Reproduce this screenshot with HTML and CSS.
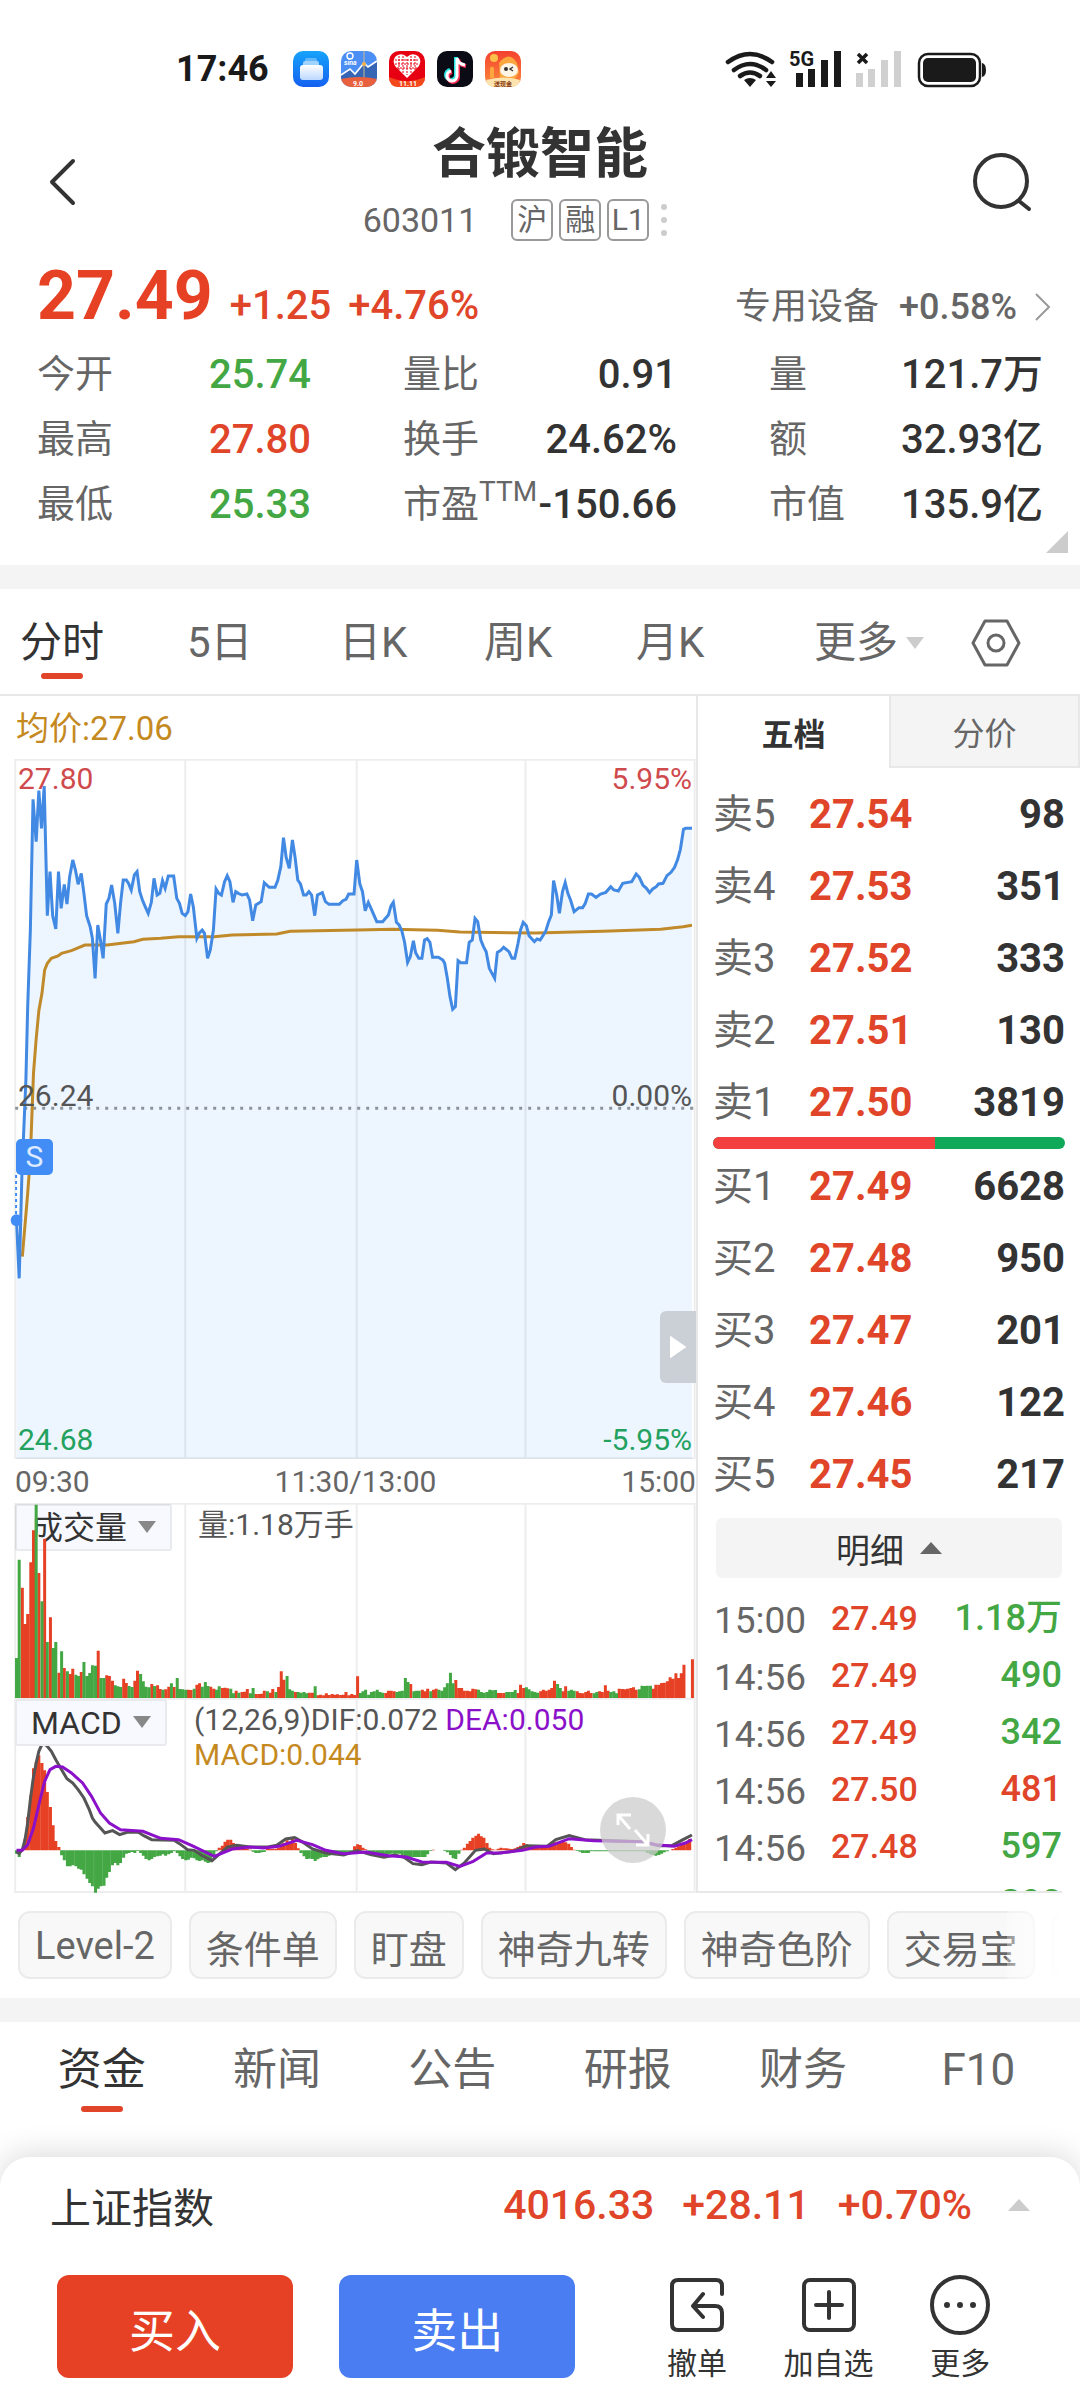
FILE: index.html
```html
<!DOCTYPE html>
<html lang="zh-CN">
<head>
<meta charset="utf-8">
<meta name="viewport" content="width=device-width, initial-scale=1">
<title>合锻智能 603011</title>
<link rel="stylesheet" href="styles.css">
</head>
<body>
<div class="status">
  <span class="clock">17:46</span>
  <div class="apps">
    <svg class="app" viewBox="0 0 36 36"><defs><linearGradient id="ga" x2="0" y2="1"><stop offset="0" stop-color="#17a3fb"/><stop offset="1" stop-color="#1460f0"/></linearGradient><linearGradient id="gb" x2="0" y2="1"><stop offset="0" stop-color="#fff"/><stop offset="1" stop-color="#bcd8ff"/></linearGradient></defs><rect width="36" height="36" rx="10" fill="url(#ga)"/><rect x="12" y="7" width="12" height="5" rx="2" fill="#63b8fb"/><rect x="10" y="10" width="16" height="6" rx="2" fill="#9fd2fd"/><rect x="7" y="14" width="23" height="15" rx="3" fill="url(#gb)"/></svg>
    <svg class="app" viewBox="0 0 36 36"><defs><clipPath id="ca"><rect width="36" height="36" rx="10"/></clipPath></defs><g clip-path="url(#ca)"><rect width="36" height="36" fill="#4b8ff5"/><path d="M0 24 9 17l5 6 9-11 4 4 9-6v18H0z" fill="#3566b5"/><path d="M0 24 9 18l5 5 9-11 4 4 9-6" fill="none" stroke="#fff" stroke-width="1.6"/><path d="M23 0v28" stroke="#c9b78f" stroke-width="1"/><circle cx="23" cy="13" r="2" fill="#f0ae48"/><path d="M0 28q18-4 36 0v8H0z" fill="#e9603f"/><circle cx="9" cy="5" r="3" fill="none" stroke="#fff" stroke-width="1.4"/><text x="3" y="14" class="tiny tiny-i">sina</text><text x="12" y="35" class="tiny">9.0</text></g></svg>
    <svg class="app" viewBox="0 0 36 36"><rect width="36" height="36" rx="10" fill="#e60012"/><path d="M0 26q18 8 36 0v0q0 10-10 10H10Q0 36 0 26z" fill="#f2481c"/><path d="M18 27 6 15q-3-6 1-10 6-4 11 1 5-5 11-1 4 4 1 10z" fill="#fff"/><path d="M10 5v14M14 5v17M18 8v16M22 5v17M26 5v14M6 9h24M6 13h24M8 17h20" stroke="#e60012" stroke-width="1" stroke-dasharray="2 1"/><text x="10" y="35" class="tiny">11.11</text></svg>
    <svg class="app" viewBox="0 0 36 36"><rect width="36" height="36" rx="10" fill="#0a0b14"/><g fill="none" stroke-width="4"><path d="M19 6v18a5 5 0 1 1-6-5M19 7q1 6 8 7" stroke="#2ae6e6"/><path d="M21 8v18a5 5 0 1 1-6-5M21 8q1 6 8 7" stroke="#fb2d55"/><path d="M20 7v18a5 5 0 1 1-6-5M20 7q1 6 8 7" stroke="#fff" stroke-width="3"/></g></svg>
    <svg class="app" viewBox="0 0 36 36"><defs><linearGradient id="gc" x2="0" y2="1"><stop offset="0" stop-color="#f4412f"/><stop offset="1" stop-color="#fb8c3b"/></linearGradient></defs><rect width="36" height="36" rx="10" fill="url(#gc)"/><circle cx="9" cy="7" r="4" fill="#fbc04b"/><path d="M14 12q10-13 18 0l2 10-5 7H15z" fill="#fba63f"/><ellipse cx="24" cy="19" rx="9" ry="7" fill="#fff5e6"/><circle cx="21" cy="18" r="2" fill="#333"/><path d="m28 16-3 2 3 2" fill="none" stroke="#333" stroke-width="1.4"/><path d="M5 27V17q2-3 4 0v10" fill="#fba63f"/><path d="M1 29q17-5 34 0-1 7-9 7H10q-8 0-9-7z" fill="#fde3ad"/><text x="9" y="35" class="tiny tiny-b">送现金</text></svg>
  </div>
  <svg class="signals" viewBox="720 48 270 42">
    <g fill="none" stroke="#1a1a1a" stroke-width="4.600" stroke-linecap="round"><path d="M728 62q22-16 44 0"/><path d="M734 70q16-12 32 0"/><path d="M740 76q10-7 20 0"/></g>
    <path d="M744 80q6-4 12 0l-6 7zM766 78l5-7 5 7zM766 81h10l-5 6z" fill="#1a1a1a"/>
    <text x="789" y="66" class="fiveg">5G</text>
    <path d="M796 73h7v14h-7zM808 69h7v18h-7zM821 60h7v27h-7zM834 51h7v36h-7z" fill="#1a1a1a"/>
    <path d="m858 54 9 9m0-9-9 9" stroke="#1a1a1a" stroke-width="3.500"/>
    <path d="M856 73h7v14h-7zM868 69h7v18h-7zM881 60h7v27h-7zM894 51h7v36h-7z" fill="#d0d0d0"/>
    <rect x="919" y="54" width="61" height="32" rx="9" fill="none" stroke="#1a1a1a" stroke-width="2.500"/><rect x="923" y="58" width="53" height="24" rx="5" fill="#1a1a1a"/><path d="M982 63q4 1 4 7t-4 7z" fill="#1a1a1a"/>
  </svg>
</div>

<header class="header">
  <button class="icon-btn" aria-label="返回"><svg width="28" height="50" viewBox="0 0 28 50"><path d="M25 4 4 25l21 21" class="line"/></svg></button>
  <div class="heading">
    <h1>合锻智能</h1>
    <div class="sub"><span class="code">603011</span><span class="tag">沪</span><span class="tag">融</span><span class="tag">L1</span><span class="dots"><i></i><i></i><i></i></span></div>
  </div>
  <button class="icon-btn" aria-label="搜索"><svg width="60" height="60" viewBox="0 0 60 60"><circle cx="29" cy="29" r="26" class="line"/><path d="m47 49 10 8" class="line"/></svg></button>
</header>

<section class="quote">
  <div class="price-row">
    <strong class="price">27.49</strong><span class="chg">+1.25</span><span class="chg">+4.76%</span>
    <a class="sector" href="#"><span>专用设备</span><span class="sector-num">+0.58%</span><svg width="16" height="30" viewBox="0 0 16 30"><path d="m1 2 13 13L1 28" fill="none" stroke="#999" stroke-width="2"/></svg></a>
  </div>
  <dl class="stats">
    <div><dt>今开</dt><dd class="down">25.74</dd></div><div><dt>量比</dt><dd>0.91</dd></div><div><dt>量</dt><dd>121.7万</dd></div>
    <div><dt>最高</dt><dd class="up">27.80</dd></div><div><dt>换手</dt><dd>24.62%</dd></div><div><dt>额</dt><dd>32.93亿</dd></div>
    <div><dt>最低</dt><dd class="down">25.33</dd></div><div><dt>市盈<sup>TTM</sup></dt><dd>-150.66</dd></div><div><dt>市值</dt><dd>135.9亿</dd></div>
  </dl>
  <span class="corner"></span>
</section>

<nav class="periods">
  <button class="on">分时</button><button>5日</button><button>日K</button><button>周K</button><button>月K</button><button>更多<i class="tri-down light"></i></button>
  <button aria-label="设置"><svg width="50" height="48" viewBox="0 0 50 48"><path d="M14 2h22l12 22-12 22H14L2 24z" fill="none" stroke="#666" stroke-width="3" stroke-linejoin="round"/><circle cx="25" cy="24" r="8" fill="none" stroke="#666" stroke-width="3"/></svg></button>
</nav>

<main class="market">
  <div class="charts">
    <div class="avg">均价:27.06</div>
    <div class="plot plot-price">
      <svg viewBox="0 57 1559 2100" preserveAspectRatio="none">
        <path id="area" class="area"/>
        <path class="grid" d="M34 59H1557M34 2155H1557M34 57V2157M415 57V2157M799 57V2157M1177 57V2157M1556 57V2157"/>
        <path class="zero" d="M34 1105H1554"/>
        <polyline class="ma" points="50,1550 62,1360 68,1250 75,1000 81,897 87,812 94,760 100,690 106,670 115,655 130,648 138,640 160,632 190,615 240,615 300,605 320,598 360,595 400,590 480,590 520,585 620,582 650,574 800,570 880,568 980,571 1030,576 1200,579 1350,574 1480,568 1530,560 1550,556"/>
        <polyline id="price" class="trend" points="37,1441 43,1615 49,1305 58,1020 62,800 68,570 74,178 81,305 87,152 93,265 99,138 106,527 112,395 118,527 125,567 131,395 137,505 144,433 150,492 156,410 163,360 169,390 175,433 182,400 188,460 194,527 202,560 207,595 213,715 219,555 225,600 231,655 238,492 244,475 250,435 257,490 264,580 270,490 276,420 283,420 288,430 294,450 301,405 307,395 313,455 319,480 326,502 332,520 339,487 345,415 352,465 358,460 364,422 370,445 377,408 389,408 396,475 402,490 408,520 415,527 421,515 427,462 433,500 441,595 447,578 453,570 458,580 465,655 471,630 478,570 484,447 490,460 496,465 503,425 509,407 515,425 522,487 528,455 534,460 542,465 553,462 559,480 566,542 573,495 585,485 592,428 603,442 616,442 622,422 629,380 635,293 641,352 648,385 655,300 661,352 667,420 673,432 680,465 686,465 692,455 698,465 705,527 711,465 722,458 729,485 737,493 760,493 768,482 775,478 781,462 793,462 799,360 806,432 812,455 818,512 825,487 831,505 844,545 857,545 870,525 876,497 881,487 888,547 894,555 900,572 906,605 913,667 919,650 926,602 931,638 938,655 945,655 951,600 957,596 963,607 969,652 982,652 992,660 996,670 1002,715 1008,770 1014,808 1020,800 1026,662 1032,668 1045,668 1051,607 1058,600 1064,535 1070,545 1077,600 1083,620 1089,635 1096,685 1108,715 1114,637 1121,632 1128,622 1140,635 1147,655 1153,655 1160,612 1166,570 1172,547 1179,557 1185,587 1197,605 1203,597 1210,600 1222,575 1229,545 1235,525 1240,422 1247,465 1253,520 1260,455 1266,428 1272,460 1278,480 1286,515 1297,503 1305,503 1311,490 1318,462 1325,462 1335,472 1345,462 1357,457 1368,440 1375,450 1385,453 1395,430 1415,425 1425,402 1432,412 1440,435 1448,445 1455,458 1462,447 1470,440 1475,432 1485,430 1494,407 1503,397 1511,382 1518,358 1524,328 1531,268 1536,265 1550,265"/>
        <path class="marker" d="M36 1305V1440"/>
        <ellipse cx="37" cy="1441" rx="13" ry="18" fill="#418df5"/>
      </svg>
      <span class="lab tl up2">27.80</span><span class="lab tr up2">5.95%</span>
      <span class="lab ml">26.24</span><span class="lab mr">0.00%</span>
      <span class="lab bl down2">24.68</span><span class="lab br down2">-5.95%</span>
      <span class="sell-mark">S</span>
      <button class="handle" aria-label="展开"><svg width="18" height="22" viewBox="0 0 18 22"><path d="M1 1q0-2 2 0l13 9q2 1 0 2L3 21q-2 2-2 0z" fill="#fff"/></svg></button>
    </div>
    <div class="times"><span>09:30</span><span>11:30/13:00</span><span>15:00</span></div>
    <div class="plot plot-sub">
      <button class="pick">成交量<i class="tri-down"></i></button>
      <svg viewBox="0 70 1559 585" preserveAspectRatio="none">
        <path class="grid" d="M34 72H1557M34 70V655M415 70V655M799 70V655M1177 70V655M1556 70V655"/>
        <path id="vol-up" class="bar-up"/><path id="vol-down" class="bar-down"/>
      </svg>
      <p class="legend legend-vol">量:1.18万手</p>
    </div>
    <div class="plot plot-sub">
      <svg viewBox="0 655 1559 585" preserveAspectRatio="none">
        <path class="grid" d="M34 657H1557M34 1237H1557M34 655V1240M415 655V1240M799 655V1240M1177 655V1240M1556 655V1240"/>
        <path id="macd-up" class="bar-up"/><path id="macd-down" class="bar-down"/>
        <polyline class="dif" points="37,1115 43,1122 50,1110 56,1080 62,1030 68,960 74,900 81,850 87,815 93,797 99,792 106,800 115,815 125,840 138,870 150,897 163,910 175,930 188,955 200,990 207,1015 213,1027 225,1045 235,1060 252,1053 268,1065 285,1058 310,1058 322,1068 340,1080 390,1082 402,1092 420,1110 435,1112 453,1128 475,1143 490,1125 510,1102 530,1097 560,1102 600,1102 620,1097 640,1078 660,1074 675,1085 700,1108 730,1120 770,1126 800,1113 830,1125 860,1133 885,1126 905,1133 925,1152 945,1155 965,1147 1000,1150 1020,1170 1040,1150 1065,1112 1085,1108 1105,1122 1150,1115 1180,1098 1225,1100 1245,1080 1275,1068 1310,1080 1440,1086 1475,1098 1505,1098 1530,1080 1550,1066"/>
        <polyline class="dea" points="37,1112 50,1112 62,1095 75,1045 88,970 100,905 112,870 125,860 140,862 160,880 185,910 205,950 225,1000 245,1030 270,1050 320,1055 360,1076 400,1080 430,1098 480,1130 520,1108 560,1102 590,1105 625,1100 665,1082 700,1095 730,1112 770,1122 820,1117 870,1128 910,1132 945,1147 1000,1148 1030,1160 1060,1145 1090,1120 1120,1120 1170,1112 1200,1102 1230,1100 1275,1077 1330,1083 1440,1086 1470,1095 1510,1100 1535,1090 1550,1080"/>
      </svg>
      <button class="pick">MACD<i class="tri-down"></i></button>
      <p class="legend">(12,26,9)DIF:0.072 <span class="t-dea">DEA:0.050</span><br><span class="t-macd">MACD:0.044</span></p>
      <button class="expand" aria-label="全屏"><svg width="36" height="36" viewBox="0 0 36 36"><path d="M3 13V3h13M3 3l12 14M20 18l13 15M33 22v11H21" fill="none" stroke="#fff" stroke-width="3"/></svg></button>
    </div>
  </div>

  <aside class="book">
    <div class="book-tabs"><button class="on">五档</button><button>分价</button></div>
    <table class="levels asks">
      <tr><th>卖5</th><td>27.54</td><td>98</td></tr>
      <tr><th>卖4</th><td>27.53</td><td>351</td></tr>
      <tr><th>卖3</th><td>27.52</td><td>333</td></tr>
      <tr><th>卖2</th><td>27.51</td><td>130</td></tr>
      <tr><th>卖1</th><td>27.50</td><td>3819</td></tr>
    </table>
    <div class="ratio"><span style="width:63%"></span></div>
    <table class="levels">
      <tr><th>买1</th><td>27.49</td><td>6628</td></tr>
      <tr><th>买2</th><td>27.48</td><td>950</td></tr>
      <tr><th>买3</th><td>27.47</td><td>201</td></tr>
      <tr><th>买4</th><td>27.46</td><td>122</td></tr>
      <tr><th>买5</th><td>27.45</td><td>217</td></tr>
    </table>
    <button class="detail">明细<i class="tri-up"></i></button>
    <div class="ticks">
      <table>
        <tr><th>15:00</th><td>27.49</td><td class="down">1.18万</td></tr>
        <tr><th>14:56</th><td>27.49</td><td class="down">490</td></tr>
        <tr><th>14:56</th><td>27.49</td><td class="down">342</td></tr>
        <tr><th>14:56</th><td>27.50</td><td class="up">481</td></tr>
        <tr><th>14:56</th><td>27.48</td><td class="down">597</td></tr>
        <tr><th></th><td>27.49</td><td class="down">290</td></tr>
      </table>
    </div>
  </aside>
</main>

<div class="chips">
  <button>Level-2</button><button>条件单</button><button>盯盘</button><button>神奇九转</button><button>神奇色阶</button><button>交易宝</button><button aria-label="下一项"></button>
</div>

<nav class="topics">
  <a class="on" href="#">资金</a><a href="#">新闻</a><a href="#">公告</a><a href="#">研报</a><a href="#">财务</a><a href="#">F10</a>
</nav>

<footer class="sheet">
  <div class="index"><span>上证指数</span><span class="index-nums"><b>4016.33</b><b>+28.11</b><b>+0.70%</b></span><i class="tri-up light"></i></div>
  <div class="actions">
    <button class="trade buy">买入</button><button class="trade sell">卖出</button>
    <button class="tool"><svg width="60" height="60" viewBox="0 0 60 60"><path d="M55 19v-8q0-6-6-6H11q-6 0-6 6v38q0 6 6 6h38q6 0 6-6V38q0-7-7-7H27M36 19 26 31l10 11" class="line"/></svg>撤单</button>
    <button class="tool"><svg width="60" height="60" viewBox="0 0 60 60"><rect x="5" y="5" width="50" height="50" rx="6" class="line"/><path d="M30 17v26M17 30h26" class="line"/></svg>加自选</button>
    <button class="tool"><svg width="60" height="60" viewBox="0 0 60 60"><circle cx="30" cy="30" r="28" class="line"/><path d="M14 30a3 3 0 1 0 6 0 3 3 0 1 0-6 0zm13 0a3 3 0 1 0 6 0 3 3 0 1 0-6 0zm13 0a3 3 0 1 0 6 0 3 3 0 1 0-6 0z" fill="#333"/></svg>更多</button>
  </div>
</footer>
<script src="charts.js"></script>
</body>
</html>
```
FILE: styles.css
```css
* { box-sizing: border-box; }
body { margin: 0; background: #fff; color: #333; font-family: Roboto, "Noto Sans CJK SC", sans-serif; overflow-x: hidden; }
button { margin: 0; padding: 0; border: 0; background: none; font: inherit; color: inherit; }
a { color: inherit; text-decoration: none; }
h1, p, dl, dd { margin: 0; }
table { border-collapse: collapse; width: 100%; }
th, td { padding: 0; text-align: left; }
svg { display: block; }
.up { color: #e0452a; }
.down { color: #43a744; }
.line { fill: none; stroke: #333; stroke-width: 4; stroke-linecap: round; stroke-linejoin: round; }

.tri-down, .tri-up { display: inline-block; border: solid transparent; border-width: 0 9px; }
.tri-down { border-top: 12px solid #888; }
.tri-up { border-width: 0 11px; border-bottom: 12px solid #666; }
.tri-down.light { border-top-color: #ccc; }
.tri-up.light { border-bottom-color: #ccc; }

/* status bar */
.status { display: flex; align-items: center; height: 96px; padding: 42px 90px 0 176px; }
.clock { font-size: 36px; font-weight: 700; line-height: 54px; color: #1a1a1a; }
.apps { display: flex; gap: 12px; margin-left: 24px; }
.app { width: 36px; height: 36px; }
.tiny { font-size: 7px; font-weight: 700; fill: #fff; }
.tiny-i { font-style: italic; }
.tiny-b { font-size: 6px; fill: #8a3a12; }
.signals { width: 270px; height: 42px; margin-left: auto; }
.fiveg { font-size: 20px; font-weight: 700; fill: #1a1a1a; }

/* title */
.header { display: grid; grid-template-columns: 1fr auto 1fr; align-items: center; height: 154px; padding: 26px 48px 9px; }
.icon-btn:last-child { justify-self: end; }
.icon-btn:first-child { justify-self: start; }
.heading { display: flex; flex-direction: column; align-items: center; gap: 12px; }
h1 { font-size: 54px; line-height: 64px; font-weight: 700; }
.sub { display: flex; align-items: center; gap: 6px; margin-right: 50px; font-size: 34px; line-height: 42px; color: #666; }
.code { margin-right: 28px; }
.tag { min-width: 42px; height: 42px; border: 2px solid #999; border-radius: 6px; font-size: 30px; line-height: 38px; text-align: center; }
.dots { display: grid; gap: 7px; margin-left: 6px; }
.dots i { width: 6px; height: 6px; border-radius: 3px; background: #ccc; }

/* quote */
.quote { position: relative; height: 315px; padding: 10px 37px 0; }
.price-row { display: flex; align-items: baseline; height: 82px; line-height: 72px; }
.price { font-size: 68px; color: #e64124; }
.chg { margin-left: 17px; font-size: 40px; font-weight: 500; color: #e0452a; }
.sector { display: flex; align-items: center; gap: 20px; margin: 0 -8px 0 auto; font-size: 36px; color: #666; }
.sector-num { font-weight: 500; margin-right: -2px; }
.stats { display: grid; grid-template-columns: repeat(3, 1fr); column-gap: 92px; }
.stats div { display: flex; justify-content: space-between; height: 65px; line-height: 65px; white-space: nowrap; }
.stats dt { font-size: 38px; color: #666; }
.stats sup { font-size: 28px; line-height: 1; vertical-align: 16px; }
.stats dd { font-size: 40px; font-weight: 500; }
.corner { position: absolute; right: 12px; bottom: 12px; border-left: 22px solid transparent; border-bottom: 22px solid #ccc; }

/* period tabs */
.periods { display: grid; grid-template-columns: 167fr 152fr 145fr 152fr 178fr 157fr 109fr; align-items: center; height: 131px; padding: 2px 0 0 20px; border-top: 24px solid #f4f4f4; border-bottom: 2px solid #e8e8e8; font-size: 42px; line-height: 60px; color: #666; }
.periods button { justify-self: start; white-space: nowrap; }
.periods .tri-down { margin-left: 8px; vertical-align: 8px; }
.periods .on, .topics .on { position: relative; color: #333; }
.periods .on::after, .topics .on::after { content: ""; position: absolute; left: 50%; bottom: -6px; width: 42px; height: 6px; margin-left: -21px; border-radius: 3px; background: #e0452a; }

/* charts */
.market { display: grid; grid-template-columns: 698fr 382fr; }
.charts { min-width: 0; border-right: 2px solid #e8e8e8; }
.avg { height: 63px; padding-left: 16px; font-size: 33px; line-height: 66px; color: #c58a1f; }
.plot { position: relative; }
.plot > svg { width: 100%; }
.plot-price > svg { height: 700px; }
.plot-sub > svg { height: 195px; }
.plot > svg path, .plot > svg polyline { fill: none; vector-effect: non-scaling-stroke; }
.plot > svg .area { fill: #edf5fe; }
.plot .grid { stroke: #000; stroke-opacity: .07; stroke-width: 2; }
.zero { stroke: #8d939a; stroke-width: 3; stroke-dasharray: 3 6; }
.trend { stroke: #4189e3; stroke-width: 3; }
.ma { stroke: #c08a2a; stroke-width: 3; }
.marker { stroke: #418df5; stroke-width: 2; stroke-dasharray: 3 3; }
.dif { stroke: #555; stroke-width: 3; }
.dea { stroke: #8b10c9; stroke-width: 3; }
.bar-up { stroke: #e64124; stroke-width: 3; }
.bar-down { stroke: #43a744; stroke-width: 3; }
.lab { position: absolute; font-size: 30px; line-height: 36px; color: #555; }
.tl, .ml, .bl { left: 18px; }
.tr, .mr, .br { right: 4px; }
.tl, .tr { top: 2px; }
.ml, .mr { top: 319px; }
.bl, .br { bottom: 1px; }
.up2 { color: #cf4a4d; }
.down2 { color: #22a15f; }
.sell-mark { position: absolute; left: 16px; top: 380px; width: 37px; height: 36px; border-radius: 5px; background: #418df5; color: #dcebff; font-size: 30px; line-height: 36px; text-align: center; }
.handle { position: absolute; right: 0; top: 552px; display: grid; place-items: center; width: 36px; height: 72px; border-radius: 6px 0 0 6px; background: #cbd0d7; }
.times { display: flex; justify-content: space-between; height: 44px; padding: 0 0 0 15px; font-size: 30px; line-height: 46px; color: #666; }
.pick { position: absolute; left: 15px; top: 1px; height: 47px; padding: 0 14px; border: 2px solid #e9eaee; border-radius: 3px; background: #f8f9fe; font-size: 32px; line-height: 45px; }
.plot-sub .pick + svg { position: relative; }
.pick .tri-down { margin-left: 11px; vertical-align: 6px; }
.legend { position: absolute; left: 194px; top: 4px; font-size: 30px; line-height: 35px; color: #555; white-space: nowrap; }
.legend-vol { left: 198px; }
.t-dea { color: #8b10c9; }
.t-macd { color: #c58a1f; }
.expand { position: absolute; right: 30px; top: 99px; display: grid; place-items: center; width: 66px; height: 66px; border-radius: 50%; background: rgba(204, 204, 204, .75); }

/* order book */
.book-tabs { display: grid; grid-template-columns: 1fr 1fr; height: 72px; margin-bottom: 9px; font-size: 32px; color: #666; }
.book-tabs button { border: 2px solid #e8e8e8; border-top: 0; background: #f4f4f4; }
.book-tabs .on { border: 0; background: #fff; font-weight: 700; color: #333; }
.levels { table-layout: fixed; }
.levels tr { height: 72px; line-height: 56px; }
.levels th, .levels td { padding-top: 3px; }
.levels th { width: 111px; padding-left: 15px; font-size: 40px; font-weight: 400; color: #666; }
.levels td { font-size: 40px; font-weight: 700; color: #e0452a; }
.levels td:last-child { padding-right: 15px; text-align: right; color: #333; }
.ratio { height: 12px; margin: 0 15px; border-radius: 6px; background: #0fa959; overflow: hidden; }
.ratio span { display: block; height: 100%; background: #f43f40; }
.detail { display: flex; align-items: center; justify-content: center; gap: 16px; width: calc(100% - 36px); height: 60px; margin: 9px 18px 13px; border-radius: 6px; background: #f4f4f4; font-size: 34px; }
.ticks { height: 302px; margin-right: 18px; border-bottom: 2px solid #e8e8e8; overflow: hidden; }
.ticks tr { height: 57px; line-height: 48px; }
.ticks th { width: 133px; padding: 2px 0 0 16px; font-size: 37px; font-weight: 400; color: #666; }
.ticks td { padding-bottom: 4px; font-size: 34px; font-weight: 500; color: #e0452a; }
.ticks td:last-child { font-size: 36px; text-align: right; }
.ticks .down { color: #43a744; }

/* feature chips */
.chips { position: relative; display: flex; gap: 17px; margin-right: 18px; padding: 18px 0 19px 18px; overflow: hidden; }
.chips button { flex: none; height: 68px; padding: 2px 15px 0; border: 2px solid #ebebeb; border-radius: 12px; background: #f8f8f8; font-size: 38px; color: #666; }
.chips button:last-child { width: 100px; }
.chips::after { content: ""; position: absolute; right: 0; top: 0; bottom: 0; width: 55px; background: linear-gradient(90deg, rgba(255, 255, 255, .3), #fff); }

/* topics */
.topics { display: grid; grid-template-columns: repeat(6, 1fr); justify-items: center; height: 159px; padding: 16px 14px 0; border-top: 24px solid #f4f4f4; font-size: 44px; line-height: 64px; color: #666; }
.topics a { height: 64px; }
.topics .on::after { bottom: -10px; }

/* bottom sheet */
.sheet { position: relative; padding: 0 50px 22px 50px; border-radius: 30px 30px 0 0; background: #fff; box-shadow: 0 -4px 30px rgba(0, 0, 0, .14); }
.index { display: flex; align-items: center; height: 100px; margin-bottom: 18px; padding-bottom: 4px; font-size: 41px; }
.index-nums { display: flex; gap: 28px; margin: 0 36px 0 auto; color: #e0452a; }
.index-nums b { font-weight: 500; }
.actions { display: flex; padding: 0 4px 0 7px; }
.trade { flex: 235 1 0; height: 103px; margin-right: 46px; border-radius: 12px; color: #fff; font-size: 46px; }
.buy { background: #e64124; }
.sell { background: #4a7df2; }
.tool { display: grid; flex: 131 1 0; align-content: start; justify-items: center; gap: 9px; height: 103px; font-size: 30px; line-height: 40px; white-space: nowrap; }
.sell + .tool { margin-left: 10px; }
```
FILE: charts.js
```js
// One value per minute; volume sign gives the bar colour (negative = falling minute).
const volume = [-120,-415,331,222,252,407,503,-580,375,-290,478,-168,242,-150,-168,76,-140,90,-80,72,88,-70,-66,78,-108,-66,-75,-98,-97,142,-60,-60,68,66,52,-38,-35,-33,58,45,-36,-33,52,82,-72,-50,-34,-32,42,-36,38,27,-25,26,34,-44,33,-60,-27,-26,-25,25,24,-28,40,44,-34,-48,-36,34,28,-25,-35,30,31,29,-28,-14,22,-16,18,19,27,-14,-30,12,12,13,22,-20,16,27,-18,33,80,55,-66,-26,-22,18,-18,-16,-18,-14,16,16,-35,8,10,8,14,9,12,10,11,9,10,18,8,12,9,65,-15,-20,-25,-10,-18,-20,-25,-18,-16,15,22,22,20,-18,-20,-22,-60,-48,42,-20,-22,-22,25,20,28,-20,25,28,-25,-22,-32,-44,-76,-44,54,30,30,22,22,20,28,26,-25,-18,-16,-18,-25,-23,-24,15,15,15,-18,-18,-18,-24,15,40,30,-32,-26,-20,-18,-16,20,25,22,25,30,52,-42,-30,20,35,-22,-25,-22,20,15,14,18,22,15,-14,-18,20,18,38,22,-18,-20,-14,28,27,26,28,30,32,25,-26,-37,-36,-37,-37,28,40,40,45,46,50,62,58,74,60,74,100,0,0,116];
const macd = [-10,-20,0,35,100,165,246,265,285,262,240,175,130,75,28,10,-15,-30,-48,-48,-45,-48,-55,-58,-72,-85,-98,-108,-127,-115,-108,-106,-82,-65,-45,-38,-45,-38,-22,-10,-8,-5,-8,-2,-8,-16,-26,-30,-26,-20,-18,-16,-12,-16,-12,-8,-3,-8,-18,-26,-30,-28,-22,-24,-30,-32,-30,-34,-38,-36,-20,-3,8,14,26,32,32,22,18,17,15,10,5,2,-4,-8,-8,-6,-5,5,5,5,5,8,14,22,30,24,36,22,6,-8,-18,-26,-25,-26,-32,-27,-22,-20,-20,-16,-12,-12,-10,-10,-8,-8,-6,-4,12,18,16,8,3,-3,-8,-12,-12,-12,-12,-12,-12,-10,-10,-10,-10,-16,-18,-20,-20,-20,-20,-20,-20,-20,-12,-2,2,0,0,0,-2,-6,-14,-24,-26,-10,2,8,20,28,38,44,50,42,38,22,8,3,2,5,8,6,6,5,4,6,10,14,22,18,14,14,12,14,12,12,12,16,20,24,26,28,26,24,20,10,2,-2,-4,-8,-8,-8,-3,-3,-3,-3,-3,-3,-3,-3,-3,-3,-3,-3,-3,-3,-3,-3,-3,-3,-3,-3,-8,-12,-14,-16,-14,-10,-6,-3,0,4,8,12,16,20,26,34];
const x = i => Math.round(37 + 6.31 * i);
const $ = id => document.getElementById(id);

function bars(data, base, signed, up, down) {
  const d = ['', ''];
  data.forEach((v, i) => {
    if (v) d[v > 0 ? 0 : 1] += `M${x(i)} ${base}v${signed ? -v : -Math.abs(v)}`;
  });
  $(up).setAttribute('d', d[0]);
  $(down).setAttribute('d', d[1]);
}
bars(volume, 655, false, 'vol-up', 'vol-down');
bars(macd, 1112, true, 'macd-up', 'macd-down');
$('area').setAttribute('d', 'M' + $('price').getAttribute('points') + ' V2157H37z');
```
